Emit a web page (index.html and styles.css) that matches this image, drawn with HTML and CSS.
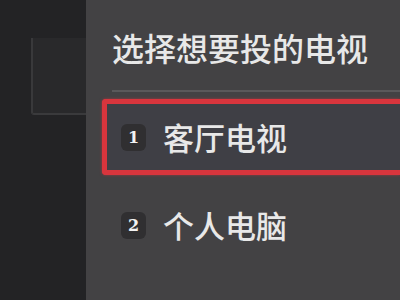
FILE: index.html
```html
<!DOCTYPE html>
<html>
<head>
    <meta charset="UTF-8">
    <title>选择想要投的电视</title>
    <link rel="stylesheet" href="styles.css">
</head>
<body>
    <div class="screen">
        <div class="backdrop">
            <div class="ghost_card"></div>
        </div>
        <div class="cast_panel">
            <h1 class="cast_title">选择想要投的电视</h1>
            <div class="device_list">
                <div class="device_item selected">
                    <span class="device_num">1</span>
                    <span class="device_name">客厅电视</span>
                </div>
                <div class="device_item">
                    <span class="device_num">2</span>
                    <span class="device_name">个人电脑</span>
                </div>
            </div>
        </div>
    </div>
</body>
</html>
```

FILE: styles.css
```css
body {
    margin: 0;
    padding: 0;
    background-color: #232325;
    font-family: "Noto Sans CJK SC", "Noto Sans", sans-serif;
}

.screen {
    display: flex;
    width: 400px;
    height: 300px;
    overflow: hidden;
}

.backdrop {
    width: 86px;
    flex-shrink: 0;
    padding-top: 38px;
    padding-left: 31px;
    box-sizing: border-box;
}

.ghost_card {
    height: 75px;
    background-color: #29292b;
    border-left: 2px solid #39393b;
    border-bottom: 2px solid #3a3a3c;
    border-radius: 0 0 0 3px;
}

.cast_panel {
    flex: 1;
    background-color: #434244;
    padding-left: 26px;
}

.cast_title {
    margin: 0;
    padding-top: 25px;
    padding-bottom: 21px;
    font-size: 32px;
    font-weight: 500;
    line-height: 44px;
    color: #e8e8e8;
    border-bottom: 2px solid #5a595b;
}

.device_list {
    margin-left: -10px;
    padding-top: 7px;
}

.device_item {
    display: flex;
    align-items: center;
    height: 76px;
    box-sizing: border-box;
    padding-left: 14px;
    border: 5px solid transparent;
    border-right: none;
    margin-bottom: 12px;
}

.device_item.selected {
    border-color: #d8353d;
    border-radius: 4px 0 0 4px;
    background-color: #3f3f45;
    box-shadow: 0 0 3px rgba(216, 53, 61, 0.6);
}

.device_num {
    width: 25px;
    height: 27px;
    border-radius: 6px;
    background-color: #302f31;
    color: #f2f2f2;
    font-family: "DejaVu Serif", serif;
    font-weight: bold;
    font-size: 16px;
    line-height: 27px;
    text-align: center;
}

.device_name {
    margin-left: 17px;
    font-size: 31px;
    font-weight: 500;
    line-height: 40px;
    color: #e8e8e8;
}
```
